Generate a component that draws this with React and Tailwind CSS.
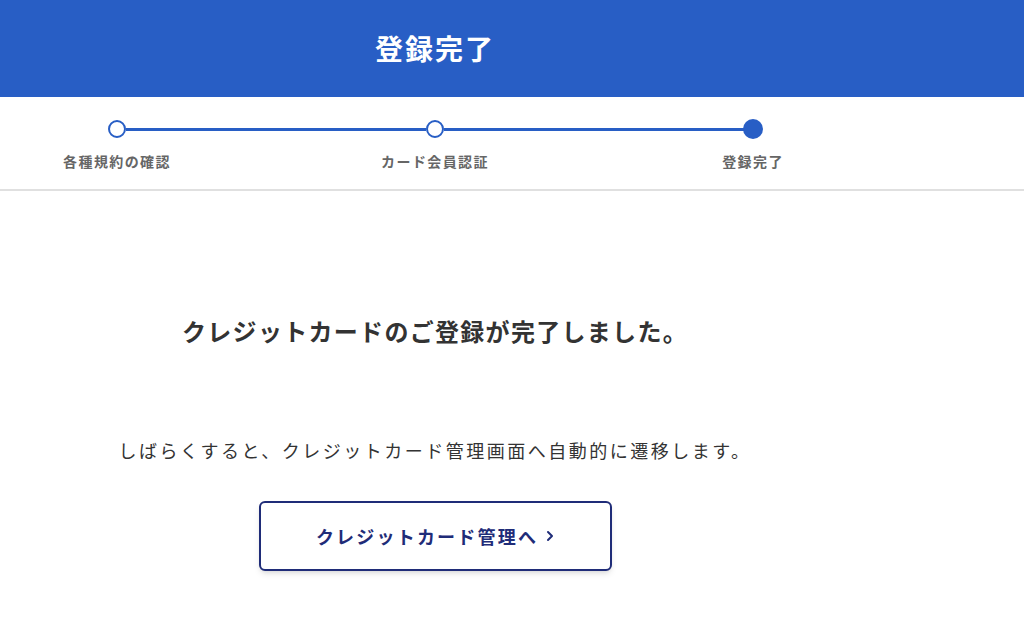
import React from 'react';

const steps = [
    { label: '各種規約の確認', done: false },
    { label: 'カード会員認証', done: false },
    { label: '登録完了', done: true },
];

const Step = ({ label, current }) => (
    <div className="relative z-10 flex w-[120px] flex-col items-center">
        {current ? (
            <span className="h-[20px] w-[20px] -mt-px rounded-full bg-[#285ec5]" />
        ) : (
            <span className="h-[18px] w-[18px] rounded-full border-[2.5px] border-[#285ec5] bg-white" />
        )}
        <span className={`${current ? 'mt-[12px]' : 'mt-[13px]'} text-[14px] font-bold leading-[20px] tracking-[1.4px] text-[#666]`}>
            {label}
        </span>
    </div>
);

const App = () => {
    return (
        <div className="min-h-screen bg-white font-['Noto_Sans_CJK_JP','Noto_Sans',sans-serif]">
            <header className="h-[97px] bg-[#285ec5]">
                <div className="flex h-full w-[870px] items-center justify-center pb-[2px]">
                    <h1 className="text-[28px] font-bold tracking-[2px] text-white">登録完了</h1>
                </div>
            </header>

            <div className="border-b-2 border-[#e0e0e0]">
                <div className="flex w-[870px] items-start px-[57px] pt-[23px] pb-[18px]">
                    {steps.map((step, i) => (
                        <React.Fragment key={step.label}>
                            {i > 0 && <div className="-mx-[51px] mt-[8px] h-[3px] flex-1 bg-[#285ec5]" />}
                            <Step label={step.label} current={step.done} />
                        </React.Fragment>
                    ))}
                </div>
            </div>

            <main className="flex w-[870px] flex-col items-center">
                <h2 className="mt-[122px] text-[24px] font-bold leading-[36px] tracking-[1.3px] text-[#333]">
                    クレジットカードのご登録が完了しました。
                </h2>
                <p className="mt-[86px] text-[18px] leading-[30px] tracking-[2.5px] text-[#333]">
                    しばらくすると、クレジットカード管理画面へ自動的に遷移します。
                </p>
                <button className="mt-[36px] flex h-[70px] w-[353px] items-center justify-center gap-[8px] rounded-md border-2 border-[#1f2c78] bg-white text-[18px] font-bold tracking-[2.2px] text-[#1f2c78] shadow-md">
                    <span>クレジットカード管理へ</span>
                    <svg width="8" height="12" viewBox="0 0 8 12" fill="none" stroke="currentColor" strokeWidth="2" strokeLinecap="round" strokeLinejoin="round">
                        <path d="M2 2l4 4-4 4" />
                    </svg>
                </button>
            </main>
        </div>
    );
};

export default App;
